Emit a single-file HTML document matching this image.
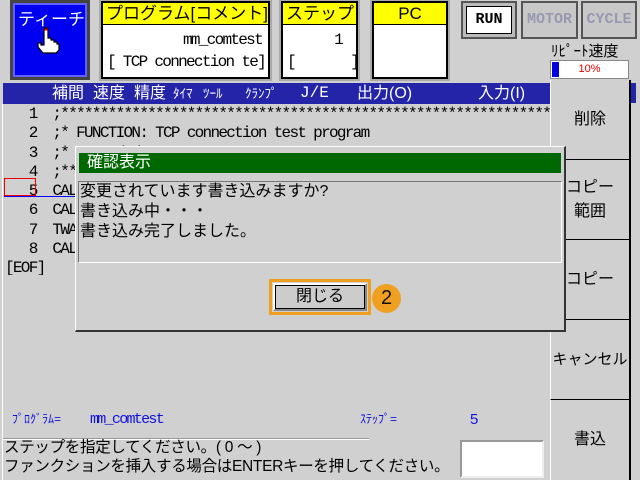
<!DOCTYPE html>
<html><head><meta charset="utf-8"><style>
*{margin:0;padding:0;box-sizing:border-box}
body{width:640px;height:480px;background:#d0d0d0;position:relative;overflow:hidden;font-family:"Liberation Sans","Noto Sans CJK JP",sans-serif;}
.a{position:absolute}
.m{font-family:"Liberation Mono","Noto Sans CJK JP",monospace;letter-spacing:-1.7px}
.box{background:#fff;border:2px solid #000;box-shadow:0 0 0 2px #aaa}
.yh{background:#ffff00;border-bottom:1px solid #000;height:22px;font-size:17px;text-align:center;line-height:22px}
.sb{position:absolute;left:550px;width:79px;height:80px;border-bottom:1px solid #000;border-left:1px solid #fff;font-size:16px;text-align:center;display:flex;align-items:center;justify-content:center;line-height:24px;white-space:nowrap}
.h{position:absolute;top:0}
</style></head><body>
<div class="a" style="left:10px;top:0;width:80px;height:80px;background:#0000f0;border:3px solid #444;box-shadow:inset 0 0 0 2px #6060ff"></div>
<div class="a" style="left:18px;top:5px;color:#fff;font-size:17px">ティーチ</div>
<svg class="a" style="left:34px;top:26px" width="28" height="28" viewBox="0 0 28 28"><path d="M10 2h4v10h3v2h3v2h3v2h2v6l-3 3H9l-5-6v-4h3v2h3z" fill="#fff" stroke="#000" stroke-width="1.2"/><rect x="10.5" y="2.5" width="3" height="2" fill="#e00"/></svg>
<div class="a box" style="left:101px;top:1px;width:169px;height:78px"><div class="yh" style="text-align:left;padding-left:3px">プログラム[コメント]</div>
<div class="m" style="text-align:right;font-size:16px;padding-right:6px;margin-top:6px">mm_comtest</div>
<div class="m" style="font-size:16px;padding-left:4px;margin-top:4px;white-space:nowrap">[ TCP connection te]</div></div>
<div class="a box" style="left:281px;top:1px;width:77px;height:78px;overflow:hidden"><div class="yh" style="text-align:left;padding-left:3px">ステップ</div>
<div class="m" style="text-align:right;font-size:16px;padding-right:14px;margin-top:6px">1</div>
<div class="m" style="font-size:16px;padding-left:4px;margin-top:4px;white-space:pre">[       ]</div></div>
<div class="a box" style="left:372px;top:1px;width:76px;height:78px"><div class="yh">PC</div></div>
<div class="a" style="left:461px;top:1px;width:56px;height:38px;background:#bbb;border:2px solid #555"><div style="margin:3px;height:28px;background:#fff;border:1px solid #000;font:bold 15px 'Liberation Mono',monospace;text-align:center;line-height:26px">RUN</div></div>
<div class="a" style="left:521px;top:1px;width:57px;height:38px;background:#c8c8c8;border:2px solid #555;font:bold 15px 'Liberation Mono',monospace;color:#9898b0;text-align:center;line-height:34px">MOTOR</div>
<div class="a" style="left:581px;top:1px;width:56px;height:38px;background:#c8c8c8;border:2px solid #555;font:bold 15px 'Liberation Mono',monospace;color:#9898b0;text-align:center;line-height:34px">CYCLE</div>
<div class="a" style="left:551px;top:40px;font-size:15px">ﾘﾋﾟｰﾄ速度</div>
<div class="a" style="left:550px;top:60px;width:79px;height:19px;background:#fff;border:1px solid #888"><div style="position:absolute;left:1px;top:1px;width:7px;height:15px;background:#0000e0"></div><div style="text-align:center;color:#e00;font-size:11px;line-height:17px">10%</div></div>
<div class="a" style="left:3px;top:83px;width:547px;height:21px;background:#2424a8;color:#fff;font-size:16px;line-height:21px;white-space:nowrap">
<span class="h" style="left:49px">補間</span><span class="h" style="left:90px">速度</span><span class="h" style="left:131px">精度</span><span class="h" style="left:170px;font-size:13px">ﾀｲﾏ</span><span class="h" style="left:200px;font-size:13px">ﾂｰﾙ</span><span class="h" style="left:242px;font-size:13px">ｸﾗﾝﾌﾟ</span><span class="h m" style="left:297px;letter-spacing:0">J/E</span><span class="h" style="left:354px">出力(O)</span><span class="h" style="left:475px">入力(I)</span></div>
<div class="a" style="left:630px;top:83px;width:6px;height:20px;background:#2424a8"></div>
<div class="a" style="left:629px;top:80px;width:2px;height:400px;background:#000"></div>
<div class="a" style="left:2px;top:104px;width:1px;height:376px;background:#fff"></div>
<div class="a" style="left:5px;top:105px;width:545px;height:170px;overflow:hidden"><div class="m" style="font-size:16px;line-height:19.3px;white-space:pre">   1  ;**************************************************************
   2  ;* FUNCTION: TCP connection test program
   3  ;*  2022/2/21
   4  ;***
   5  CAL
   6  CAL
   7  TWA
   8  CAL
[EOF]</div></div>
<div class="a" style="left:4px;top:178px;width:32px;height:18px;border:1px solid #e00"></div>
<div class="a" style="left:4px;top:196px;width:72px;height:1px;background:#00f"></div>
<div class="sb" style="top:80px">削除</div>
<div class="sb" style="top:160px">コピー<br>範囲</div>
<div class="sb" style="top:240px">コピー</div>
<div class="sb" style="top:320px;font-size:15px">キャンセル</div>
<div class="sb" style="top:400px;border-bottom:none">書込</div>
<div class="a" style="left:75px;top:146px;width:491px;height:186px;background:#d0d0d0;border-left:1px solid #fff;border-top:1px solid #fff;border-right:2px solid #333;border-bottom:2px solid #333"></div>
<div class="a" style="left:79px;top:153px;width:482px;height:20px;background:#006800;color:#fff;font-size:16px;line-height:20px;padding-left:8px">確認表示</div>
<div class="a" style="left:78px;top:181px;width:484px;height:82px;border:1px solid #777;border-right-color:#fff;border-bottom-color:#fff;font-size:16px;line-height:20px;padding-left:1px">変更されています書き込みますか?<br>書き込み中・・・<br>書き込み完了しました。</div>
<div class="a" style="left:269px;top:279px;width:102px;height:36px;border:3px solid #f0a020"></div>
<div class="a" style="left:273px;top:283px;width:94px;height:28px;background:#ccc;border:2px solid #fff;border-right-color:#888;border-bottom-color:#888"><div style="border:1px solid #000;height:24px;text-align:center;font-size:16px;line-height:22px">閉じる</div></div>
<div class="a" style="left:372px;top:284px;width:29px;height:29px;border-radius:50%;background:#f0a020;text-align:center;font-size:20px;line-height:29px;color:#111">2</div>
<div class="a" style="left:12px;top:410px;color:#1010e0;font-size:12px">ﾌﾟﾛｸﾞﾗﾑ=</div>
<div class="a m" style="left:90px;top:411px;color:#1010e0;font-size:15px">mm_comtest</div>
<div class="a" style="left:360px;top:410px;color:#1010e0;font-size:12px">ｽﾃｯﾌﾟ=</div>
<div class="a" style="left:470px;top:411px;color:#1010e0;font-size:15px">5</div>
<div class="a" style="left:3px;top:438px;width:366px;height:2px;background:#999;border-bottom:1px solid #fff"></div>
<div class="a" style="left:4px;top:438px;font-size:15.5px;line-height:19px;white-space:nowrap;letter-spacing:-0.3px">ステップを指定してください。( 0 ～ )<br>ファンクションを挿入する場合はENTERキーを押してください。</div>
<div class="a" style="left:460px;top:440px;width:84px;height:38px;background:#fff;border:2px solid #999;border-right-color:#eee;border-bottom-color:#eee"></div>
</body></html>
